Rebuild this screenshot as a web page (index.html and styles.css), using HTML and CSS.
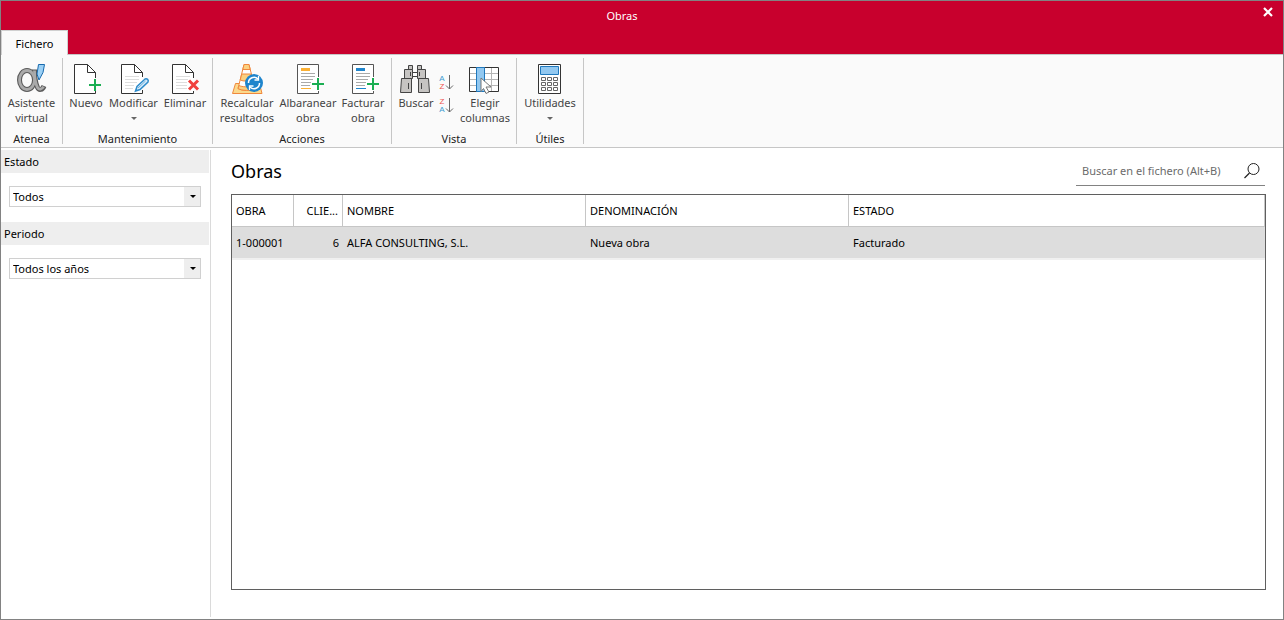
FILE: index.html
```html
<!DOCTYPE html>
<html lang="es">
<head>
<meta charset="utf-8">
<title>Obras</title>
<link rel="stylesheet" href="styles.css">
</head>
<body>
<div class="window">
  <header class="titlebar">
    <div class="window-title">Obras</div>
    <button class="close" aria-label="Cerrar">
      <svg width="10" height="10" viewBox="0 0 10 10"><path d="M1 1l8 8M9 1l-8 8" stroke="#fff" stroke-width="2.2"/></svg>
    </button>
    <button class="tab">Fichero</button>
  </header>

  <nav class="ribbon">
    <section class="group">
      <div class="tools tools-atenea">
        <button class="tool">
          <svg class="icon" viewBox="0 0 32 32">
            <g fill="none" stroke="#5a5a5a" stroke-width="5">
              <ellipse cx="11" cy="17" rx="7.500" ry="9.500"/>
              <path d="M18.500 6.500c0 8 1 14 3 18 1.500 3 5 2.500 6.500-1.500"/>
            </g>
            <g fill="none" stroke="#aaa" stroke-width="2.800">
              <ellipse cx="11" cy="17" rx="7.500" ry="9.500"/>
              <path d="M18.500 7.500c0 7 1 13 3 17 1.500 2.500 4.500 2 6-.8"/>
            </g>
            <path d="M22.500 1.500h6l-1.500 8-4 7.500-2-6z" fill="#9bd0f5" stroke="#1769ad"/>
          </svg>
          <span>Asistente<br>virtual</span>
        </button>
      </div>
      <h2 class="group-name">Atenea</h2>
    </section>

    <section class="group">
      <div class="tools tools-mantenimiento">
        <button class="tool">
          <svg class="icon" viewBox="0 0 32 32">
            <path d="M4.500 1.500h13l8 8v21h-21z" fill="#fff"/>
            <path d="M25.500 15V9.500l-8-8h-13v29h21V28M17.500 1.500v8h8" fill="none" stroke="#333"/>
            <path d="M25 16v12M19 22h12" stroke="#1aae52" stroke-width="2"/>
          </svg>
          <span>Nuevo</span>
        </button>
        <button class="tool">
          <svg class="icon" viewBox="0 0 32 32">
            <path d="M3.500 1.500h13l8 8v21h-21z" fill="#fff"/>
            <path d="M7 13.500h14M7 16.500h14M7 19.500h12M7 22.500h9M7 25.500h8" stroke="#ddd"/>
            <path d="M24.500 14V9.500l-8-8h-13v29h21V27M16.500 1.500v8h8" fill="none" stroke="#333"/>
            <path d="M17.500 28l1.500-4.500 8-7.500c2-1 4 1 3 3l-8 7.500z" fill="#d9ecfa" stroke="#2e8ccb" stroke-width="1.500"/>
            <path d="M20 25l7.500-7" stroke="#2e8ccb" stroke-width=".6"/>
          </svg>
          <span>Modificar</span>
          <i class="caret"></i>
        </button>
        <button class="tool">
          <svg class="icon" viewBox="0 0 32 32">
            <path d="M3.500 1.500h13l8 8v21h-21z" fill="#fff"/>
            <path d="M7 13.500h14M7 16.500h12M7 19.500h11M7 22.500h11M7 25.500h11" stroke="#ddd"/>
            <path d="M24.500 15V9.500l-8-8h-13v29h21V28M16.500 1.500v8h8" fill="none" stroke="#333"/>
            <path d="M20 17.500l9 9M29 17.500l-9 9" stroke="#f0403c" stroke-width="3"/>
          </svg>
          <span>Eliminar</span>
        </button>
      </div>
      <h2 class="group-name">Mantenimiento</h2>
    </section>

    <section class="group">
      <div class="tools tools-acciones">
        <button class="tool">
          <svg class="icon" viewBox="0 0 32 32">
            <path d="M4.500 20.500h24l2.500 10H1.500z" fill="#fbd98c" stroke="#f0883c"/>
            <path d="M13 1.500h5l6 24c-4 2.500-13 2.500-17 0z" fill="#fff" stroke="#f0883c"/>
            <path d="M13 1.500h5l1.200 5h-7.400zM10.700 11h9.600l1.500 6c-3 1.500-9.600 1.500-12.600 0zM8 22.500c3 1.500 10 2 15 0l1 3c-4 2.500-13 2.500-17 0z" fill="#fbd080" stroke="#f0883c"/>
            <circle cx="23" cy="20" r="9" fill="#1f85cc"/>
            <path d="M17.500 20a5.500 5.500 0 0 1 9.500-4M28.500 20a5.500 5.500 0 0 1-9.500 4" fill="none" stroke="#fff" stroke-width="1.500"/>
            <path d="M27.500 13v4h-4M18.500 27v-4h4" fill="none" stroke="#fff" stroke-width="1.300"/>
          </svg>
          <span>Recalcular<br>resultados</span>
        </button>
        <button class="tool">
          <svg class="icon" viewBox="0 0 32 32">
            <path d="M26.500 14V1.500h-21v29h21V28" fill="#fff" stroke="#555"/>
            <path d="M9 5h9v3H9z" fill="#fbb034"/>
            <path d="M9 10.500h14M9 13.500h14M9 16.500h12M9 19.500h10M9 22.500h9" stroke="#aaa"/>
            <path d="M9 25.500h10" stroke="#fbb034"/>
            <path d="M26 15v12M20 21h12" stroke="#1aae52" stroke-width="2"/>
          </svg>
          <span>Albaranear<br>obra</span>
        </button>
        <button class="tool">
          <svg class="icon" viewBox="0 0 32 32">
            <path d="M26.500 14V1.500h-21v29h21V28" fill="#fff" stroke="#555"/>
            <path d="M9 5h9v3H9z" fill="#1f85cc"/>
            <path d="M9 10.500h14M9 13.500h14M9 16.500h12M9 19.500h10M9 22.500h9" stroke="#aaa"/>
            <path d="M9 25.500h10" stroke="#1f85cc"/>
            <path d="M26 15v12M20 21h12" stroke="#1aae52" stroke-width="2"/>
          </svg>
          <span>Facturar<br>obra</span>
        </button>
      </div>
      <h2 class="group-name">Acciones</h2>
    </section>

    <section class="group">
      <div class="tools tools-vista">
        <button class="tool">
          <svg class="icon" viewBox="0 0 32 32">
            <g fill="#c6c4c2" stroke="#444">
              <path d="M12.500 9.500h5v4h-5z" fill="#fff"/>
              <path d="M8.500 2.500h4v4h-4zM17.500 2.500h4v4h-4z"/>
              <path d="M4.500 6.500h8v9h-8zM17.500 6.500h8v9h-8z"/>
              <path d="M1.500 15.500h10v14H.5zM18.500 15.500h10l1 14h-11z"/>
            </g>
            <path d="M10.500 9v4M19.500 9v4M8.500 20v6M21.500 20v6" stroke="#444"/>
          </svg>
          <span>Buscar</span>
        </button>
        <div class="sort">
          <button class="sort-button" aria-label="Orden ascendente">
            <svg width="18" height="20" viewBox="0 0 18 20">
              <text x="4" y="9" class="letter-a">A</text><text x="4" y="17" class="letter-z">Z</text>
              <path d="M11.500 3v14M8 13.500l3.500 3.500 3.500-3.500" fill="none" stroke="#666"/>
            </svg>
          </button>
          <button class="sort-button" aria-label="Orden descendente">
            <svg width="18" height="20" viewBox="0 0 18 20">
              <text x="4" y="9" class="letter-z">Z</text><text x="4" y="17" class="letter-a">A</text>
              <path d="M11.500 3v14M8 13.500l3.500 3.500 3.500-3.500" fill="none" stroke="#666"/>
            </svg>
          </button>
        </div>
        <button class="tool">
          <svg class="icon" viewBox="0 0 32 32">
            <path d="M1 4.500h29v24H1z" fill="#fff"/>
            <path d="M1 10.500h29M1 16.500h29M1 22.500h29M22.500 5v23" stroke="#b5b5b5"/>
            <path d="M.5 4.500h29v24H.5z" fill="none" stroke="#333"/>
            <path d="M7.500 4.500h8v24h-8z" fill="#92c8f0" stroke="#1f78bd"/>
            <path d="M12 15l10 9h-5l3 5-3 1.500-2.500-5-2.500 3z" fill="#fff" stroke="#777"/>
          </svg>
          <span>Elegir<br>columnas</span>
        </button>
      </div>
      <h2 class="group-name">Vista</h2>
    </section>

    <section class="group">
      <div class="tools tools-utiles">
        <button class="tool">
          <svg class="icon" viewBox="0 0 32 32">
            <path d="M4.500 1.500h22v29h-22z" fill="#fff" stroke="#333"/>
            <path d="M6.500 3.500h18v8h-18z" fill="#92c8f0" stroke="#1f78bd"/>
            <path d="M7.500 14.500h4v3h-4zM13.500 14.500h4v3h-4zM19.500 14.500h4v3h-4zM7.500 19.500h4v3h-4zM13.500 19.500h4v3h-4zM19.500 19.500h4v3h-4zM7.500 24.500h4v3h-4zM13.500 24.500h4v3h-4zM19.500 24.500h4v3h-4z" fill="none" stroke="#666"/>
          </svg>
          <span>Utilidades</span>
          <i class="caret"></i>
        </button>
      </div>
      <h2 class="group-name">Útiles</h2>
    </section>
  </nav>

  <div class="body">
    <aside class="sidebar">
      <label class="filter-name" for="estado">Estado</label>
      <div class="combo">
        <select id="estado"><option>Todos</option></select>
      </div>
      <label class="filter-name" for="periodo">Periodo</label>
      <div class="combo">
        <select id="periodo"><option>Todos los años</option></select>
      </div>
    </aside>

    <main class="content">
      <div class="heading">
        <h1>Obras</h1>
        <form class="search">
          <input type="text" placeholder="Buscar en el fichero (Alt+B)" aria-label="Buscar en el fichero">
          <button type="button" aria-label="Buscar">
            <svg width="16" height="16" viewBox="0 0 16 16"><circle cx="9.500" cy="6" r="5.500" fill="none" stroke="#222"/><path d="M5.500 10L.5 15" stroke="#222" stroke-width="1.300"/></svg>
          </button>
        </form>
      </div>
      <div class="grid">
        <table>
          <colgroup><col class="col-obra"><col class="col-cliente"><col class="col-nombre"><col class="col-denominacion"><col></colgroup>
          <thead>
            <tr><th>OBRA</th><th class="number">CLIE...</th><th>NOMBRE</th><th>DENOMINACIÓN</th><th>ESTADO</th></tr>
          </thead>
          <tbody>
            <tr><td>1-000001</td><td class="number">6</td><td>ALFA CONSULTING, S.L.</td><td>Nueva obra</td><td>Facturado</td></tr>
          </tbody>
        </table>
      </div>
    </main>
  </div>
</div>
</body>
</html>
```
FILE: styles.css
```css
* { box-sizing: border-box; }

body {
  margin: 0;
  font: 11px/15px "Noto Sans", "Open Sans", sans-serif;
  color: #000;
}

button, input, select {
  font: inherit;
  color: inherit;
  margin: 0;
  padding: 0;
  border: 0;
  border-radius: 0;
  background: none;
}

svg { display: block; }

.window {
  display: flex;
  flex-direction: column;
  min-height: 100vh;
  border: 1px solid #828282;
  background: #fff;
}

/* Title bar */
.titlebar {
  display: grid;
  grid-template-columns: 1fr auto 1fr;
  grid-template-rows: 29px 24px;
  background: #c8002d;
  border-bottom: 1px solid #c6c6c6;
}
.window-title {
  grid-column: 2;
  align-self: center;
  padding-right: 40px;
  color: #fff;
}
.close {
  grid-column: 3;
  justify-self: end;
  align-self: start;
  padding: 6px 10px;
}
.tab {
  grid-column: 1;
  grid-row: 2;
  justify-self: start;
  width: 67px;
  margin-bottom: -1px;
  background: #fafafa;
  border: 1px solid #d0d0d0;
  border-bottom: 0;
}

/* Ribbon */
.ribbon {
  display: flex;
  padding: 3px 0;
  background: #fafafa;
  border-bottom: 1px solid #c6c6c6;
}
.group {
  display: flex;
  flex-direction: column;
  justify-content: space-between;
  border-right: 1px solid #c6c6c6;
}
.tools {
  display: grid;
  height: 75px;
  padding: 5px 4px 0;
  color: #444;
}
.tools-atenea { grid-template-columns: 53px; }
.tools-mantenimiento { grid-template-columns: 44px 51px 52px; padding: 5px 1px 0; }
.tools-acciones { grid-template-columns: 58px 62px 46px; gap: 1px; padding: 5px 5px 0; }
.tools-vista { grid-template-columns: 40px 22px 54px; }
.tools-utiles { grid-template-columns: 58px; }
.tool {
  display: flex;
  flex-direction: column;
  align-items: center;
  justify-content: flex-start;
  white-space: nowrap;
}
.icon {
  width: 32px;
  height: 32px;
}
.caret {
  margin-top: 7px;
  border: 3px solid transparent;
  border-top-color: #666;
  border-bottom: 0;
}
.group-name {
  margin: 0;
  font: inherit;
  line-height: 11px;
  text-align: center;
  color: #222;
}
.sort {
  display: flex;
  flex-direction: column;
  gap: 3px;
  padding: 9px 0 0 2px;
}
.letter-a, .letter-z {
  font: 8px "Liberation Sans", sans-serif;
  text-anchor: middle;
  fill: #3d9bd0;
}
.letter-z { fill: #ef5350; }

/* Filters */
.body {
  display: flex;
  flex: 1;
}
.sidebar {
  width: 210px;
  margin: 2px 0;
  border-right: 1px solid #dadada;
}
.filter-name {
  display: block;
  margin-right: 1px;
  padding: 4px 3px;
  background: #eee;
}
.combo {
  position: relative;
  margin: 13px 9px 15px 8px;
}
.combo select {
  display: block;
  width: 100%;
  height: 21px;
  padding-left: 3px;
  appearance: none;
  border: 1px solid #d0d0d0;
  background: linear-gradient(#eee, #eee) right / 16px 100% no-repeat #fff;
}
.combo::after {
  content: "";
  position: absolute;
  top: 9px;
  right: 5px;
  border: 3px solid transparent;
  border-top-color: #000;
  border-bottom: 0;
}

/* Content */
.content {
  display: flex;
  flex-direction: column;
  flex: 1;
  padding: 9px 17px 29px 20px;
}
.heading {
  display: flex;
  justify-content: space-between;
  margin-bottom: 8px;
}
.heading h1 {
  margin: 0;
  font-size: 18px;
  font-weight: 400;
  line-height: 29px;
}
.search {
  display: flex;
  width: 189px;
  margin-right: 1px;
  padding: 0 5px 1px 6px;
  border-bottom: 1px solid #828282;
}
.search input {
  flex: 1;
  min-width: 0;
  outline: 0;
}
.search input::placeholder {
  color: #6b6b6b;
  opacity: 1;
}
.grid {
  flex: 1;
  border: 1px solid #5f5f5f;
}
table {
  width: 100%;
  table-layout: fixed;
  border-collapse: separate;
  border-spacing: 0;
}
.col-obra { width: 62px; }
.col-cliente { width: 49px; }
.col-nombre { width: 243px; }
.col-denominacion { width: 263px; }
th, td {
  height: 32px;
  padding: 0 4px;
  font-weight: 400;
  text-align: left;
  white-space: nowrap;
}
th {
  border-right: 1px solid #c6c6c6;
  border-bottom: 1px solid #c6c6c6;
}
td {
  height: 33px;
  background: #ddd;
  border-bottom: 2px solid #f0f0f0;
}
.number { text-align: right; }
```
